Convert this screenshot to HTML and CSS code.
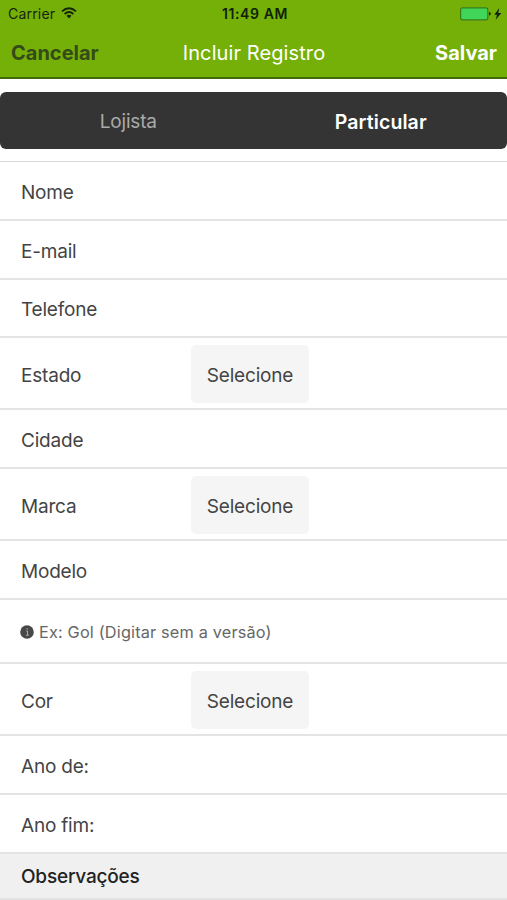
FILE: index.html
```html
<!DOCTYPE html>
<html lang="pt-BR">
<head>
<meta charset="utf-8">
<title>Incluir Registro</title>
<link rel="stylesheet" href="styles.css">
</head>
<body>
<header class="header">
  <div class="status">
    <div class="status-left"><span class="carrier">Carrier</span>
      <svg class="wifi" width="16" height="12" viewBox="0 0 16 12" fill="none" stroke="#17250a" stroke-width="1.9"><path d="M1 4.4Q8-1.8 15 4.4M3.6 7Q8 3.2 12.4 7"/><path d="M5.5 8.8Q8 6.8 10.5 8.8L8 11.5Z" fill="#17250a" stroke="none"/></svg>
    </div>
    <span class="time">11:49 AM</span>
    <div class="status-right">
      <svg width="42" height="14" viewBox="0 0 42 14"><rect x=".6" y=".8" width="27.2" height="12" rx="2" fill="#40d65a" stroke="#387d18" stroke-width="1.2"/><path d="M29 5q1.8 0 1.8 1.8T29 8.6z" fill="#17250a"/><path d="M39.3 1 34.3 7.7h2.7l-1.3 5L41.3 6h-3.1z" fill="#10200a"/></svg>
    </div>
  </div>
  <nav class="nav">
    <a class="cancel">Cancelar</a>
    <h1 class="title">Incluir Registro</h1>
    <a class="save">Salvar</a>
  </nav>
</header>
<div class="tabs"><span class="tab">Lojista</span><span class="tab active">Particular</span></div>
<main class="form">
  <div class="row"><label>Nome</label></div>
  <div class="row"><label>E-mail</label></div>
  <div class="row"><label>Telefone</label></div>
  <div class="row select"><label>Estado</label><button>Selecione</button></div>
  <div class="row"><label>Cidade</label></div>
  <div class="row select"><label>Marca</label><button>Selecione</button></div>
  <div class="row"><label>Modelo</label></div>
  <div class="row hint">
    <svg width="14" height="14" viewBox="0 0 14 14"><circle cx="7" cy="7" r="6.8" fill="#484848"/><path d="M6.2 6h1.3v4M6 10.2h2.9" fill="none" stroke="#aaa"/><circle cx="7.1" cy="4" r=".8" fill="#aaa"/></svg>
    <span>Ex: Gol (Digitar sem a versão)</span>
  </div>
  <div class="row select"><label>Cor</label><button>Selecione</button></div>
  <div class="row"><label>Ano de:</label></div>
  <div class="row"><label>Ano fim:</label></div>
  <h2 class="section">Observações</h2>
</main>
</body>
</html>
```
FILE: styles.css
```css
* { box-sizing: border-box; }
body { margin: 0; height: 900px; overflow: hidden; background: #fff; color: #444; font: 19px Inter, "Liberation Sans", sans-serif; letter-spacing: -0.2px; }
.header { height: 79px; background: #75b008; border-bottom: 2px solid #44690a; }
.status { height: 27px; display: grid; grid-template-columns: 1fr auto 1fr; align-items: center; padding: 0 5px 0 8px; color: #17250a; font-size: 14px; letter-spacing: 0.2px; }
.status-left { display: flex; align-items: center; gap: 6px; }
.wifi { margin-top: -2px; }
.time { font-weight: 600; color: #10200a; letter-spacing: 0.6px; }
.status-right { display: flex; justify-content: flex-end; }
.nav { height: 50px; display: grid; grid-template-columns: 1fr auto 1fr; align-items: center; padding: 2px 10px 0 11px; color: #fff; line-height: 24px; }
.cancel, .save { font-size: 20px; font-weight: 700; letter-spacing: 0; }
.cancel { color: #354b18; }
.save { text-align: right; }
.title { margin: 0; font-size: 20px; font-weight: 400; letter-spacing: 0.1px; }
.tabs { height: 57px; margin: 13px 0 12px; display: flex; align-items: center; background: #343434; border-radius: 6px; color: #aaa; }
.tab { flex: 1; text-align: center; padding-top: 2px; }
.tab:first-child { padding-left: 2px; }
.active { color: #fff; font-size: 19.5px; font-weight: 600; letter-spacing: 0.1px; }
.form { border-top: 1px solid #d9d9d9; }
.row { height: 58.75px; display: flex; align-items: center; padding: 2px 21px 0; border-bottom: 2px solid #e4e4e4; }
.row label { width: 170px; padding-top: 2px; }
.select { height: 72.1px; }
.row button { width: 118px; height: 58px; padding: 2px 0 0; border: 0; border-radius: 5px; background: #f5f5f5; color: #444; font: inherit; letter-spacing: -0.2px; }
.hint { height: 64.3px; padding-top: 1px; padding-left: 20px; gap: 5px; color: #666; font-size: 16.3px; letter-spacing: 0.17px; }
.section { margin: 0; height: 46px; display: flex; align-items: center; padding: 2px 0 0 21px; background: #f0f0f0; border-bottom: 2px solid #e2e2e2; color: #222; font-size: 19px; font-weight: 500; }
```
